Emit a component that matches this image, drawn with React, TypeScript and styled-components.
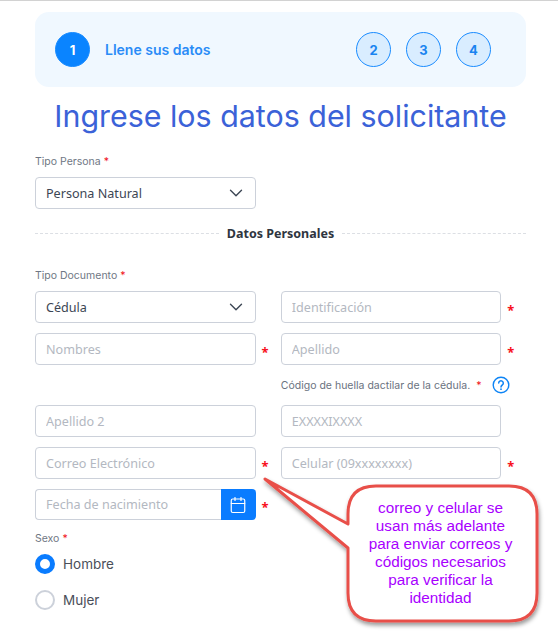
import React from 'react';
import styled, { createGlobalStyle } from 'styled-components';
import { Calendar, ChevronDown } from 'lucide-react';

const GlobalStyle = createGlobalStyle`
  html, body {
    margin: 0;
    padding: 0;
    background: #fff;
  }
  body {
    font-family: 'Noto Sans', sans-serif;
  }
`;

const HEADING_FONT = `Inter, Lato, sans-serif`;

const Field = ({ placeholder }: { placeholder: string }) => (
  <FieldRow>
    <TextInput placeholder={placeholder} readOnly />
  </FieldRow>
);

const RequiredField = ({ placeholder }: { placeholder: string }) => (
  <FieldRow>
    <TextInput placeholder={placeholder} readOnly />
    <Star>*</Star>
  </FieldRow>
);

export default function App() {
  return (
    <Page>
      <GlobalStyle />
      <Stepper>
        <ActiveStep>
          <StepCircle $active>1</StepCircle>
          <StepLabel>Llene sus datos</StepLabel>
        </ActiveStep>
        <PendingSteps>
          <StepCircle>2</StepCircle>
          <StepCircle>3</StepCircle>
          <StepCircle>4</StepCircle>
        </PendingSteps>
      </Stepper>

      <Title>Ingrese los datos del solicitante</Title>

      <Label>
        Tipo Persona <Red>*</Red>
      </Label>
      <SelectBox>
        <span>Persona Natural</span>
        <ChevronDown size={22} strokeWidth={1.5} color="#3c4654" />
      </SelectBox>

      <Divider>
        <DashLine />
        <DividerText>Datos Personales</DividerText>
        <DashLine />
      </Divider>

      <Label>
        Tipo Documento <Red>*</Red>
      </Label>
      <FormGrid>
        <SelectBox>
          <span>Cédula</span>
          <ChevronDown size={22} strokeWidth={1.5} color="#3c4654" />
        </SelectBox>
        <RequiredField placeholder="Identificación" />
        <RequiredField placeholder="Nombres" />
        <RequiredField placeholder="Apellido" />
        <div />
        <Hint>
          Código de huella dactilar de la cédula. <Red>*</Red>
          <HelpIcon viewBox="0 0 18 18">
            <circle cx="9" cy="9" r="7.8" fill="none" stroke="#0d84f5" strokeWidth="1.4" />
            <path
              d="M6.7 7.1a2.3 2.3 0 1 1 3.6 1.9c-.8.5-1.3 1-1.3 2"
              fill="none"
              stroke="#0d84f5"
              strokeWidth="1.5"
              strokeLinecap="round"
            />
            <circle cx="9" cy="13.2" r="0.9" fill="#0d84f5" />
          </HelpIcon>
        </Hint>
        <Field placeholder="Apellido 2" />
        <Field placeholder="EXXXXIXXXX" />
        <RequiredField placeholder="Correo Electrónico" />
        <RequiredField placeholder="Celular (09xxxxxxxx)" />
        <FieldRow>
          <DateGroup>
            <DateInput placeholder="Fecha de nacimiento" readOnly />
            <DateButton>
              <Calendar size={18} strokeWidth={1.6} color="#fff" />
            </DateButton>
          </DateGroup>
          <Star>*</Star>
        </FieldRow>
      </FormGrid>

      <SexLabel>
        Sexo <Red>*</Red>
      </SexLabel>
      <RadioRow>
        <RadioDot $checked />
        Hombre
      </RadioRow>
      <RadioRow>
        <RadioDot />
        Mujer
      </RadioRow>

      <Callout>
        <CalloutShape viewBox="0 0 300 170">
          <defs>
            <filter id="calloutShadow" x="-10%" y="-10%" width="125%" height="125%">
              <feDropShadow dx="1" dy="3" stdDeviation="2" floodColor="#000" floodOpacity="0.4" />
            </filter>
          </defs>
          <path
            d="M10 10 L93 55 L93 45 Q93 17 121 17 L254 17 Q282 17 282 45 L282 124 Q282 152 254 152 L121 152 Q93 152 93 124 L93 79 Z"
            fill="#fff"
            stroke="#e8504a"
            strokeWidth="3"
            strokeLinejoin="round"
            filter="url(#calloutShadow)"
          />
        </CalloutShape>
        <CalloutText>
          correo y celular se
          <br />
          usan más adelante
          <br />
          para enviar correos y
          <br />
          códigos necesarios
          <br />
          para verificar la
          <br />
          identidad
        </CalloutText>
      </Callout>
    </Page>
  );
}

const Page = styled.div`
  position: relative;
  box-sizing: border-box;
  width: 558px;
  height: 633px;
  overflow: hidden;
  border-top: 1px solid #d2d2d2;
  padding: 11px 32px 0 35px;
`;

const Stepper = styled.div`
  display: flex;
  align-items: center;
  justify-content: space-between;
  height: 75px;
  padding: 0 35px 0 20px;
  background: #f0f8ff;
  border-radius: 14px;
`;

const ActiveStep = styled.div`
  display: flex;
  align-items: center;
  gap: 15px;
`;

const PendingSteps = styled.div`
  display: flex;
  gap: 15px;
`;

const StepCircle = styled.div<{ $active?: boolean }>`
  box-sizing: border-box;
  display: flex;
  align-items: center;
  justify-content: center;
  width: 35px;
  height: 35px;
  border-radius: 50%;
  border: 1px solid #1a8cff;
  background: ${(p) => (p.$active ? '#0a84ff' : '#d9edff')};
  color: ${(p) => (p.$active ? '#fff' : '#1a84f0')};
  font-family: ${HEADING_FONT};
  font-size: 13px;
  font-weight: 700;
`;

const StepLabel = styled.div`
  font-family: ${HEADING_FONT};
  font-size: 14px;
  font-weight: 600;
  color: #2a8cf7;
`;

const Title = styled.h1`
  margin: 11px 0 0;
  height: 36px;
  font-family: ${HEADING_FONT};
  font-size: 30.4px;
  line-height: 36px;
  font-weight: 400;
  text-align: center;
  color: #3b62d8;
  white-space: nowrap;
`;

const Label = styled.div`
  margin-top: 20px;
  height: 16px;
  margin-bottom: 7px;
  font-family: ${HEADING_FONT};
  font-size: 10.5px;
  line-height: 16px;
  color: #6f7784;
`;

const Red = styled.span`
  color: #f01020;
`;

const SelectBox = styled.div`
  box-sizing: border-box;
  display: flex;
  align-items: center;
  justify-content: space-between;
  width: 220.5px;
  height: 32px;
  padding: 0 8px 0 10px;
  border: 1px solid #ccd1da;
  border-radius: 4px;
  font-size: 12.6px;
  color: #3c4654;
`;

const Divider = styled.div`
  display: flex;
  align-items: center;
  gap: 8px;
  width: 491px;
  height: 20px;
  margin: 14px 0 25px;
`;

const DashLine = styled.div`
  flex: 1;
  border-top: 1px dashed #dcdfe4;
`;

const DividerText = styled.div`
  font-size: 12.5px;
  font-weight: 700;
  color: #2f3540;
`;

const FormGrid = styled.div`
  display: grid;
  grid-template-columns: 245.8px 245.8px;
  row-gap: 10px;
  align-items: center;
`;

const FieldRow = styled.div`
  display: flex;
  align-items: center;
`;

const TextInput = styled.input`
  box-sizing: border-box;
  width: 220.5px;
  height: 32px;
  padding: 0 10px;
  border: 1px solid #ccd1da;
  border-radius: 4px;
  outline: none;
  background: #fff;
  font-family: 'Noto Sans', sans-serif;
  font-size: 12.6px;
  &::placeholder {
    color: #b3b8c1;
    opacity: 1;
  }
`;

const Star = styled.span`
  margin: 5px 0 0 6px;
  font-size: 13px;
  line-height: 14px;
  font-weight: 700;
  color: #f8101c;
`;

const Hint = styled.div`
  display: flex;
  align-items: center;
  gap: 3px;
  height: 20px;
  font-family: ${HEADING_FONT};
  font-size: 10.5px;
  color: #6a7280;
  white-space: pre;
`;

const HelpIcon = styled.svg`
  width: 18px;
  height: 18px;
  margin-left: 8px;
`;

const DateGroup = styled.div`
  display: flex;
  width: 220.5px;
  height: 31px;
`;

const DateInput = styled(TextInput)`
  flex: 1;
  width: auto;
  min-width: 0;
  height: 31px;
  border-right: none;
  border-radius: 4px 0 0 4px;
`;

const DateButton = styled.div`
  display: flex;
  align-items: center;
  justify-content: center;
  width: 35px;
  background: #0a7cff;
  border-radius: 0 4px 4px 0;
`;

const SexLabel = styled(Label)`
  margin-top: 11px;
  margin-bottom: 0;
`;

const RadioRow = styled.div`
  display: flex;
  align-items: center;
  gap: 8px;
  height: 20px;
  margin: 7px 0 16px;
  font-family: ${HEADING_FONT};
  font-size: 13.5px;
  color: #4a4f5a;
`;

const RadioDot = styled.span<{ $checked?: boolean }>`
  box-sizing: border-box;
  width: 20px;
  height: 20px;
  border-radius: 50%;
  background: #fff;
  border: ${(p) => (p.$checked ? '5px solid #0a7cff' : '2px solid #ccd1da')};
`;

const Callout = styled.div`
  position: absolute;
  left: 255px;
  top: 468px;
  width: 300px;
  height: 170px;
`;

const CalloutShape = styled.svg`
  position: absolute;
  inset: 0;
  width: 300px;
  height: 170px;
  overflow: visible;
`;

const CalloutText = styled.div`
  position: absolute;
  left: 91px;
  top: 30px;
  width: 189px;
  font-family: 'Liberation Sans', sans-serif;
  font-size: 15.3px;
  line-height: 18px;
  text-align: center;
  color: #a800ff;
`;
